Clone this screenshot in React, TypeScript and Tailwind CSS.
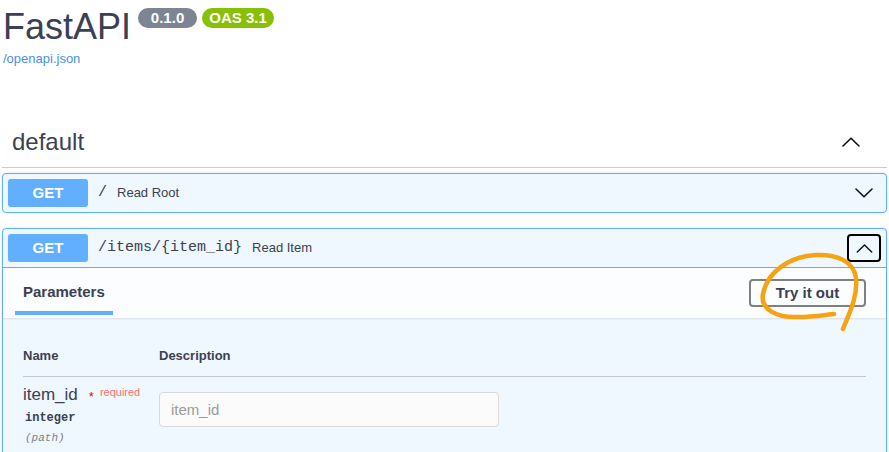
import React from 'react';

const sans = { fontFamily: '"Liberation Sans", Arial, sans-serif' };
const mono = { fontFamily: '"Liberation Mono", "Courier New", monospace' };

const Chevron = ({ up = false, className = '' }: { up?: boolean; className?: string }) => (
  <svg viewBox="0 0 18 10" className={className} fill="none">
    <path d={up ? 'M1 9 L9 1.2 L17 9' : 'M1 1 L9 8.8 L17 1'} stroke="#111" strokeWidth="1.6" strokeLinecap="round" strokeLinejoin="round" />
  </svg>
);

const GetBadge = () => (
  <span className="flex h-[28px] w-[80px] shrink-0 items-center justify-center rounded-[3px] bg-[#61affe] text-[15px] font-bold text-white">GET</span>
);

const App: React.FC = () => {
  return (
    <div className="relative min-h-screen overflow-hidden bg-white text-[#3b4151]" style={sans}>
      <header className="px-[3px] pt-[8px]">
        <div className="flex items-start">
          <h1 className="mt-[1px] text-[36px] leading-[36px] text-[#3b4151]">FastAPI</h1>
          <span className="ml-[7px] flex h-[20px] w-[59px] items-center justify-center rounded-full bg-[#7d8492] text-[15px] font-bold text-white">0.1.0</span>
          <span className="ml-[5px] flex h-[20px] w-[72px] items-center justify-center rounded-full bg-[#89bf04] text-[15px] font-bold text-white">OAS 3.1</span>
        </div>
        <a className="mt-[6px] block text-[13px] leading-[16px] text-[#4990e2]">/openapi.json</a>
      </header>

      <section className="mt-[59px] px-[2px]">
        <div className="flex items-start justify-between border-b border-[#cccccc] pb-[9px] pl-[10px] pr-[27px]">
          <h3 className="text-[24px] leading-[32px]">default</h3>
          <div className="flex h-[32px] items-center">
            <Chevron up className="h-[10px] w-[18px]" />
          </div>
        </div>

        <div className="mt-[5px] flex items-center rounded-[4px] border border-[#61affe] bg-[#eff7ff] p-[5px] shadow-[0_0_3px_rgba(0,0,0,0.12)]">
          <GetBadge />
          <span className="ml-[10px] text-[15px]" style={mono}>/</span>
          <span className="ml-[10px] text-[13px]">Read Root</span>
          <div className="ml-auto flex h-[28px] w-[34px] items-center justify-center">
            <Chevron className="h-[10px] w-[18px]" />
          </div>
        </div>

        <div className="mt-[15px] rounded-[4px] border border-[#61affe] bg-[#eff7ff] shadow-[0_0_3px_rgba(0,0,0,0.12)]">
          <div className="flex items-center border-b border-[#61affe] p-[5px]">
            <GetBadge />
            <span className="ml-[10px] text-[15px]" style={mono}>/items/{'{'}item_id{'}'}</span>
            <span className="ml-[10px] text-[13px]">Read Item</span>
            <div className="ml-auto flex h-[28px] w-[34px] items-center justify-center rounded-[4px] border-2 border-black">
              <Chevron up className="h-[9px] w-[17px]" />
            </div>
          </div>

          <div className="flex h-[50px] items-start justify-between bg-white/80 px-[20px] shadow-[0_1px_2px_rgba(0,0,0,0.1)]">
            <div className="pt-[14px]">
              <div className="text-[15px] font-bold leading-[20px]">Parameters</div>
              <div className="-mx-[8px] mt-[9px] h-[4px] bg-[#61affe]" />
            </div>
            <button className="mt-[11px] h-[28px] w-[117px] rounded-[4px] border-2 border-[#808080] text-[15px] font-bold text-[#3b4151]">Try it out</button>
          </div>

          <div className="px-[20px] pb-[20px] pt-[30px]">
            <div className="flex border-b border-[#c3c6cc] pb-[12px] text-[13px] font-bold leading-[16px]">
              <div className="w-[136px]">Name</div>
              <div>Description</div>
            </div>
            <div className="flex pt-[8px]">
              <div className="w-[136px]">
                <div className="flex items-start">
                  <span className="text-[17px] leading-[20px]">item_id</span>
                  <span className="ml-[11px] mt-[6px] text-[13px] leading-[12px] text-[#ff0000]">*</span>
                  <span className="ml-[6px] mt-[1px] text-[11px] leading-[12px] text-[#ff6f6f]">required</span>
                </div>
                <div className="ml-[2px] mt-[6px] text-[12px] font-bold leading-[14px]" style={mono}>integer</div>
                <div className="ml-[2px] mt-[6px] text-[11px] italic leading-[14px] text-[#808080]" style={mono}>(path)</div>
              </div>
              <div className="pt-[7px]">
                <input
                  placeholder="item_id"
                  className="h-[35px] w-[340px] rounded-[4px] border border-[#d9d9d9] bg-[#fbfbfb] px-[11px] text-[15px] outline-none placeholder:text-[#9a9a9a]"
                />
              </div>
            </div>
          </div>
        </div>
      </section>

      <svg className="pointer-events-none absolute left-[750px] top-[250px] h-[85px] w-[120px]" viewBox="0 0 120 85" fill="none">
        <path
          d="M93 79 C99 64 108 46 106 28 C104 12 88 4 66 5 C40 6 17 22 13 44 C10 60 28 68 48 67 C62 67 74 65 84 64"
          stroke="#f5a315"
          strokeWidth="4.5"
          strokeLinecap="round"
          strokeLinejoin="round"
        />
      </svg>
    </div>
  );
};

export default App;
